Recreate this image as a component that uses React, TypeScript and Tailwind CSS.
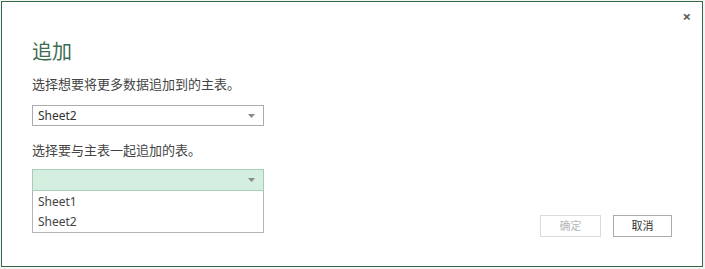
const font = {
  fontFamily: '"Segoe UI", "Noto Sans", "Noto Sans CJK SC", sans-serif',
};

const Arrow = () => (
  <svg width="7" height="4" viewBox="0 0 7 4" className="block">
    <path d="M0 0 L7 0 L3.5 4 Z" fill="#8a8a8a" />
  </svg>
);

const App: React.FC = () => {
  return (
    <div className="w-[705px] h-[269px] bg-[#f4f4f4] pl-[1px] pt-[1px]" style={font}>
      <div className="relative w-[702px] h-[266px] bg-white border border-[#35684b] flex flex-col pl-[30px] pr-[30px]">
        <button className="absolute top-[5px] right-[11px] text-[15px] leading-[18px] text-[#5a5a5a] font-bold">
          ×
        </button>

        <h1 className="mt-[37px] text-[20px] leading-[26px] text-[#3e6d53] font-normal">
          追加
        </h1>

        <p className="mt-[10px] text-[13px] leading-[18px] text-[#444444]">
          选择想要将更多数据追加到的主表。
        </p>

        <div className="mt-[12px] w-[232px] h-[21px] border border-[#ababab] bg-white flex items-center justify-between pl-[5px] pr-[8px]">
          <span className="text-[12px] leading-[16px] text-[#333333]">Sheet2</span>
          <Arrow />
        </div>

        <div className="flex items-end justify-between">
          <div className="flex flex-col pb-[4px]">
            <p className="mt-[15px] text-[13px] leading-[18px] text-[#444444]">
              选择要与主表一起追加的表。
            </p>
            <div className="mt-[10px] w-[232px] h-[22px] border border-[#a6cdb5] bg-[#d4eedf] flex items-center justify-end pr-[8px]">
              <Arrow />
            </div>
            <div className="w-[232px] border border-t-0 border-[#b4b4b4] bg-white flex flex-col pt-[1px]">
              <div className="h-[20px] pl-[5px] flex items-center text-[12px] text-[#444444]">Sheet1</div>
              <div className="h-[20px] pl-[5px] flex items-center text-[12px] text-[#444444]">Sheet2</div>
            </div>
          </div>

          <div className="flex gap-[12px]">
            <button className="w-[61px] h-[22px] border border-[#dcdcdc] bg-white text-[11px] text-[#b8b8b8]">
              确定
            </button>
            <button className="w-[59px] h-[22px] border border-[#acacac] bg-white text-[11px] text-[#333333]">
              取消
            </button>
          </div>
        </div>
      </div>
    </div>
  );
};

export default App;
